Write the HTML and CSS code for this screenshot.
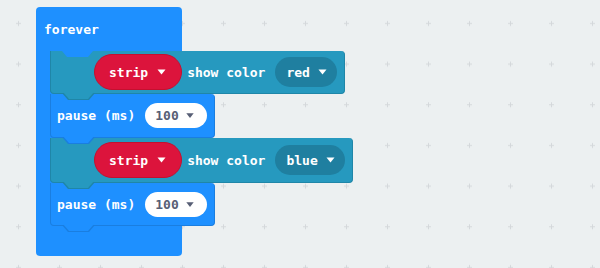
FILE: index.html
```html
<!DOCTYPE html>
<html>
<head>
<meta charset="utf-8">
<link rel="stylesheet" href="styles.css">
</head>
<body>
<svg class="grid" width="600" height="268" aria-hidden="true">
  <defs>
    <pattern id="plus" width="41" height="40.67" patternUnits="userSpaceOnUse">
      <rect x="16" y="23" width="5" height="1" fill="#d4d8db"/>
      <rect x="18" y="21" width="1" height="5" fill="#d4d8db"/>
    </pattern>
  </defs>
  <rect width="600" height="268" fill="url(#plus)" shape-rendering="crispEdges"/>
</svg>
<div class="canvas">
  <div class="forever">
    <div class="hat">forever</div>
    <div class="stack">
      <div class="block teal first">
        <span class="pill red-pill">strip <svg class="arrow" width="9" height="6" viewBox="0 0 9 6"><path d="M0.5 0.5h8L4.5 5.5z"/></svg></span>
        <span class="label show">show color</span>
        <span class="pill dark-pill">red <svg class="arrow" width="9" height="6" viewBox="0 0 9 6"><path d="M0.5 0.5h8L4.5 5.5z"/></svg></span>
      </div>
      <div class="block blue">
        <span class="label">pause (ms)</span>
        <span class="pill num-pill">100 <svg class="arrow" width="8" height="5" viewBox="0 0 8 5"><path d="M0.3 0.3h7.4L4 4.9z"/></svg></span>
      </div>
      <div class="block teal second">
        <span class="pill red-pill">strip <svg class="arrow" width="9" height="6" viewBox="0 0 9 6"><path d="M0.5 0.5h8L4.5 5.5z"/></svg></span>
        <span class="label show">show color</span>
        <span class="pill dark-pill">blue <svg class="arrow" width="9" height="6" viewBox="0 0 9 6"><path d="M0.5 0.5h8L4.5 5.5z"/></svg></span>
      </div>
      <div class="block blue last">
        <span class="label">pause (ms)</span>
        <span class="pill num-pill">100 <svg class="arrow" width="8" height="5" viewBox="0 0 8 5"><path d="M0.3 0.3h7.4L4 4.9z"/></svg></span>
      </div>
    </div>
    <div class="foot"></div>
  </div>
</div>
</body>
</html>
```

FILE: styles.css
```css
html, body {
  margin: 0;
  padding: 0;
  width: 600px;
  height: 268px;
  overflow: hidden;
  background: #ecf0f1;
}

body {
  font-family: "DejaVu Sans Mono", "Liberation Mono", monospace;
  font-weight: bold;
  font-size: 13px;
  color: #fff;
}

.grid {
  position: absolute;
  left: 0;
  top: 0;
  z-index: 0;
}

.canvas {
  position: relative;
  z-index: 1;
  padding: 7px 0 0 36px;
}

.forever {
  position: relative;
  width: 146px;
  background: #1e90ff;
  border-radius: 4px;
  display: flex;
  flex-direction: column;
}

.hat {
  position: relative;
  height: 44px;
  display: flex;
  align-items: center;
  padding-left: 8px;
  padding-top: 1px;
  box-sizing: border-box;
}

.hat::after {
  content: "";
  position: absolute;
  left: 26px;
  top: 100%;
  width: 31px;
  height: 6px;
  background: #1e90ff;
  clip-path: polygon(0 0, 100% 0, calc(100% - 5px) 100%, 5px 100%);
  z-index: 2;
}

.stack {
  margin-left: 14px;
  display: flex;
  flex-direction: column;
  align-items: flex-start;
}

.foot {
  height: 30px;
}

.block {
  position: relative;
  display: flex;
  align-items: center;
  box-sizing: border-box;
  border-radius: 0 4px 4px 4px;
  white-space: nowrap;
}

.block::before {
  content: "";
  position: absolute;
  left: 11px;
  top: 100%;
  width: 33px;
  height: 7px;
  clip-path: polygon(0 0, 100% 0, calc(100% - 6px) 100%, 6px 100%);
  z-index: 2;
}

.block::after {
  content: "";
  position: absolute;
  left: 12px;
  top: calc(100% - 1px);
  width: 31px;
  height: 7px;
  clip-path: polygon(0 0, 100% 0, calc(100% - 6px) 100%, 6px 100%);
  z-index: 3;
}

.teal {
  background: #2699bf;
  border: 1px solid #1f86a8;
  border-top: none;
  padding: 0 7px 0 43px;
}
.teal::before { background: #1f86a8; }
.teal::after { background: #2699bf; }

.first { height: 43px; }
.second { height: 45px; }

.blue {
  background: #1e90ff;
  border: 1px solid #1a7ee0;
  border-top: none;
  height: 44px;
  padding: 0 7px 0 6px;
}
.blue::before { background: #1a7ee0; }
.blue::after { background: #1e90ff; }
.last { height: 43px; }

.label {
  margin-right: 10px;
}

.show {
  margin-left: 5px;
}

.pill {
  display: flex;
  align-items: center;
  box-sizing: border-box;
  border-radius: 999px;
}

.arrow {
  display: block;
  fill: currentColor;
}

.red-pill {
  height: 36px;
  padding: 0 15px 0 14px;
  gap: 9px;
  background: #dc143c;
  border: 1px solid #c4102f;
}

.dark-pill {
  height: 30px;
  padding: 0 10px 0 11px;
  gap: 8px;
  background: #1f7fa0;
}

.num-pill {
  height: 25px;
  padding: 0 13px 0 10px;
  gap: 7px;
  background: #fff;
  color: #575e75;
}
```
